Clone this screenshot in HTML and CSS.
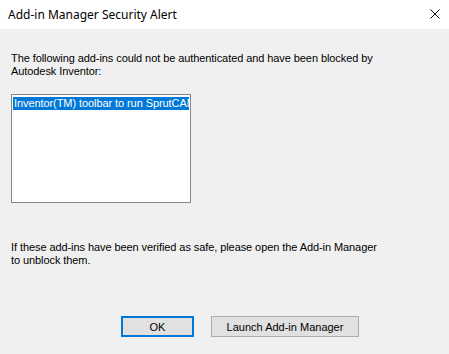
FILE: index.html
```html
<!DOCTYPE html>
<html lang="en">
<head>
    <meta name="viewport" content="width=device-width, initial-scale=1.0">
    <title>Add-in Manager Security Alert</title>
    <link rel="stylesheet" href="styles.css">
</head>
<body>
    <div class="window">
        <div class="title-bar">
            <span class="title">Add-in Manager Security Alert</span>
            <span class="close">
                <svg width="10" height="10" viewBox="0 0 10 10">
                    <path d="M0.5 0.5 L9.5 9.5 M9.5 0.5 L0.5 9.5" stroke="#000" stroke-width="1" fill="none"/>
                </svg>
            </span>
        </div>
        <div class="content">
            <p class="message">The following add-ins could not be authenticated and have been blocked by<br>Autodesk Inventor:</p>
            <div class="listbox">
                <div class="item selected">Inventor(TM) toolbar to run SprutCAM</div>
            </div>
            <p class="message bottom">If these add-ins have been verified as safe, please open the Add-in Manager<br>to unblock them.</p>
            <div class="buttons">
                <button class="btn default">OK</button>
                <button class="btn wide">Launch Add-in Manager</button>
            </div>
        </div>
    </div>
</body>
</html>
```

FILE: styles.css
```css
body {
    margin: 0;
    padding: 0;
    background: #f0f0f0;
}
.window {
    width: 449px;
    height: 354px;
    background: #f0f0f0;
    overflow: hidden;
}
.title-bar {
    height: 29px;
    background: #fff;
    display: flex;
    align-items: center;
    justify-content: space-between;
    padding: 0 9px 0 8px;
}
.title {
    font-family: "Noto Sans", sans-serif;
    font-size: 12px;
    color: #000;
    margin-top: -1px;
}
.close {
    display: flex;
    margin-top: -1px;
}
.content {
    padding: 0 11px;
    font-family: "Liberation Sans", Arial, sans-serif;
    font-size: 11px;
    letter-spacing: -0.08px;
    color: #000;
}
.message {
    margin: 0;
    line-height: 13px;
    padding-top: 23px;
}
.message.bottom {
    padding-top: 38px;
}
.listbox {
    width: 176px;
    height: 103px;
    margin-top: 16px;
    border: 1px solid #828790;
    background: #fff;
    padding: 2px 1px;
    overflow: hidden;
}
.item {
    height: 13px;
    line-height: 13px;
    white-space: nowrap;
    overflow: hidden;
    padding-left: 1px;
}
.item.selected {
    background: #0078d7;
    color: #fff;
}
.buttons {
    display: flex;
    gap: 17px;
    margin-top: 49px;
    padding-left: 110px;
}
.btn {
    height: 21px;
    font-family: "Liberation Sans", Arial, sans-serif;
    font-size: 11px;
    color: #000;
    background: #e1e1e1;
    border: 1px solid #adadad;
    padding: 0;
    margin: 0;
}
.btn.default {
    width: 73px;
    border: 2px solid #0078d7;
}
.btn.wide {
    width: 148px;
}
```
